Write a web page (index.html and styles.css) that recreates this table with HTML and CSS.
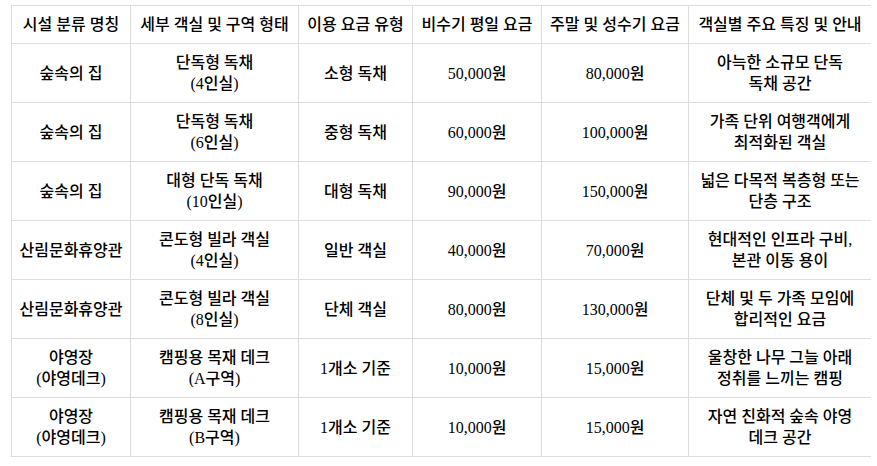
FILE: index.html
```html
<!DOCTYPE html>
<html lang="ko">
<head>
<meta charset="utf-8">
<link rel="stylesheet" href="styles.css">
</head>
<body>
<table class="rates">
  <colgroup>
    <col class="c1"><col class="c2"><col class="c3"><col class="c4"><col class="c5"><col class="c6">
  </colgroup>
  <thead>
    <tr>
      <th>시설 분류 명칭</th>
      <th>세부 객실 및 구역 형태</th>
      <th>이용 요금 유형</th>
      <th>비수기 평일 요금</th>
      <th>주말 및 성수기 요금</th>
      <th>객실별 주요 특징 및 안내</th>
    </tr>
  </thead>
  <tbody>
    <tr>
      <td>숲속의 집</td>
      <td>단독형 독채<br>(4인실)</td>
      <td>소형 독채</td>
      <td>50,000원</td>
      <td>80,000원</td>
      <td>아늑한 소규모 단독<br>독채 공간</td>
    </tr>
    <tr>
      <td>숲속의 집</td>
      <td>단독형 독채<br>(6인실)</td>
      <td>중형 독채</td>
      <td>60,000원</td>
      <td>100,000원</td>
      <td>가족 단위 여행객에게<br>최적화된 객실</td>
    </tr>
    <tr>
      <td>숲속의 집</td>
      <td>대형 단독 독채<br>(10인실)</td>
      <td>대형 독채</td>
      <td>90,000원</td>
      <td>150,000원</td>
      <td>넓은 다목적 복층형 또는<br>단층 구조</td>
    </tr>
    <tr>
      <td>산림문화휴양관</td>
      <td>콘도형 빌라 객실<br>(4인실)</td>
      <td>일반 객실</td>
      <td>40,000원</td>
      <td>70,000원</td>
      <td>현대적인 인프라 구비,<br>본관 이동 용이</td>
    </tr>
    <tr>
      <td>산림문화휴양관</td>
      <td>콘도형 빌라 객실<br>(8인실)</td>
      <td>단체 객실</td>
      <td>80,000원</td>
      <td>130,000원</td>
      <td>단체 및 두 가족 모임에<br>합리적인 요금</td>
    </tr>
    <tr>
      <td>야영장<br>(야영데크)</td>
      <td>캠핑용 목재 데크<br>(A구역)</td>
      <td>1개소 기준</td>
      <td>10,000원</td>
      <td>15,000원</td>
      <td>울창한 나무 그늘 아래<br>정취를 느끼는 캠핑</td>
    </tr>
    <tr>
      <td>야영장<br>(야영데크)</td>
      <td>캠핑용 목재 데크<br>(B구역)</td>
      <td>1개소 기준</td>
      <td>10,000원</td>
      <td>15,000원</td>
      <td>자연 친화적 숲속 야영<br>데크 공간</td>
    </tr>
  </tbody>
</table>
</body>
</html>
```

FILE: styles.css
```css
html, body {
  background: #ffffff;
}
body {
  margin: 5px 6px 0 11px;
  font-family: "Liberation Serif", "Noto Sans CJK KR", serif;
  font-size: 16px;
  line-height: 21px;
  color: #000000;
}
.rates {
  width: 860px;
  border-collapse: collapse;
  table-layout: fixed;
}
.rates th,
.rates td {
  border: 1px solid #dddddd;
  padding: 8px 4px;
  text-align: center;
  vertical-align: middle;
  font-weight: 500;
  white-space: nowrap;
}
.c1 { width: 119px; }
.c2 { width: 168px; }
.c3 { width: 114px; }
.c4 { width: 129px; }
.c5 { width: 147px; }
.c6 { width: 183px; }
```
